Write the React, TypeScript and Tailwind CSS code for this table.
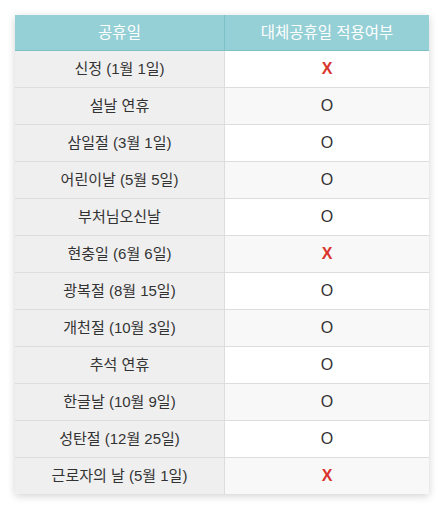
const rows: [string, boolean][] = [
  ["신정 (1월 1일)", false],
  ["설날 연휴", true],
  ["삼일절 (3월 1일)", true],
  ["어린이날 (5월 5일)", true],
  ["부처님오신날", true],
  ["현충일 (6월 6일)", false],
  ["광복절 (8월 15일)", true],
  ["개천절 (10월 3일)", true],
  ["추석 연휴", true],
  ["한글날 (10월 9일)", true],
  ["성탄절 (12월 25일)", true],
  ["근로자의 날 (5월 1일)", false],
];

export default function App() {
  return (
    <div
      className="w-[444px] h-[506px] bg-white pt-[15px] pl-[15px]"
      style={{ fontFamily: '"Liberation Sans", "Noto Sans CJK KR", sans-serif' }}
    >
      <div className="w-[414px] shadow-[0_2px_8px_rgba(0,0,0,0.18)]">
        <div className="grid grid-cols-[210px_1fr] bg-[#95d0d6] border-b border-[#7fbfc6] text-white text-[15.5px]">
          <div className="h-[35px] flex items-center justify-center border-r border-[#7fbfc6]">공휴일</div>
          <div className="h-[35px] flex items-center justify-center">대체공휴일 적용여부</div>
        </div>
        {rows.map(([name, ok], i) => (
          <div
            key={name}
            className={`grid grid-cols-[210px_1fr] text-[15px] text-[#333] ${i < rows.length - 1 ? "border-b border-[#dddddd]" : ""}`}
          >
            <div className="h-[36px] flex items-center justify-center bg-[#efefef] border-r border-[#dddddd]">{name}</div>
            <div className={`h-[36px] flex items-center justify-center ${i % 2 === 0 ? "bg-white" : "bg-[#f8f8f8]"}`}>
              {ok ? (
                <span className="text-[16px]">O</span>
              ) : (
                <span className="text-[16px] font-bold text-[#d9342b]">X</span>
              )}
            </div>
          </div>
        ))}
      </div>
    </div>
  );
}
